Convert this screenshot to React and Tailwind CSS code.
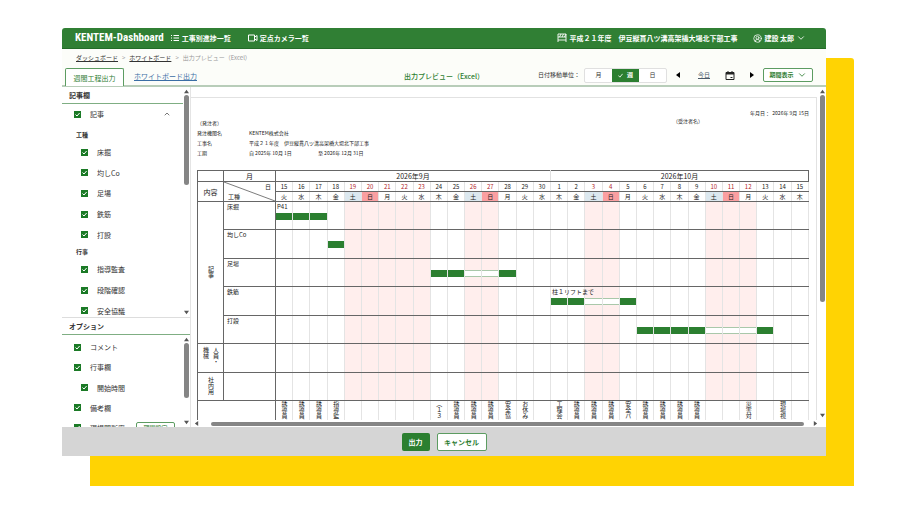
import { ChevronDown, ChevronUp, CircleUserRound } from 'lucide-react';

const WEEK = ['火', '水', '木', '金', '土', '日', '月'];
const HOLIDAYS = [4, 5, 6, 7, 8, 11, 12, 18, 19, 25, 26, 27];

// 9/15 - 10/15
const DAYS = Array.from({ length: 31 }, (_, i) => ({
  day: i < 16 ? i + 15 : i - 15,
  week: WEEK[i % 7],
  holiday: HOLIDAYS.includes(i),
}));

// bars: 1 = working day, 0 = day off inside the period
const WORKS = [
  { name: '床掘', start: 0, bars: [1, 1, 1], label: 'P41' },
  { name: '均しCo', start: 3, bars: [1] },
  { name: '足場', start: 9, bars: [1, 1, 0, 0, 1] },
  { name: '鉄筋', start: 16, bars: [1, 1, 0, 0, 1], label: '柱１リフトまで' },
  { name: '打設', start: 21, bars: [1, 1, 1, 1, 0, 0, 0, 1] },
];

const EVENTS = {
  0: '誘導員', 1: '誘導員', 2: '誘導員', 3: '指導監', 9: '（１３', 10: '誘導員', 11: '誘導員', 12: '誘導員',
  13: '安全協', 14: 'お休み', 16: '工程会', 17: '誘導員', 18: '誘導員', 19: '誘導員', 20: '安全パ',
  21: '誘導員', 22: '誘導員', 23: '誘導員', 24: '誘導員', 27: '災害対', 29: '現場視',
};

const PROJECT = '平成２１年度　伊豆縦貫八ツ溝高架橋大場北下部工事';

const Arrow = ({ className }) => (
  <svg viewBox="0 0 6 6" className={`size-[5px] shrink-0 fill-[#555] ${className}`}>
    <path d="M3 1 6 5H0Z" />
  </svg>
);

const VScroll = ({ size }) => (
  <div className="flex w-[7px] shrink-0 flex-col items-center bg-white py-px">
    <Arrow className="mt-px mb-px" />
    <div className="min-h-0 w-full flex-1 px-px">
      <div className="rounded-full bg-[#858585]" style={{ height: `${size}%` }} />
    </div>
    <Arrow className="mb-px rotate-180" />
  </div>
);

const Check = ({ label, nested, children }) => (
  <li className={`flex flex-1 items-center ${nested ? 'pl-[19px]' : 'pl-3'}`}>
    <label className="flex items-center gap-[9px]">
      <span className="grid">
        <input
          type="checkbox"
          defaultChecked
          className="peer col-start-1 row-start-1 size-[7px] appearance-none border border-[#1b7a26] bg-white checked:bg-[#1b7a26]"
        />
        <svg viewBox="0 0 7 7" className="pointer-events-none col-start-1 row-start-1 hidden size-[7px] peer-checked:block">
          <path d="M1.5 3.5 3 5 5.6 2" fill="none" stroke="white" strokeWidth="1" />
        </svg>
      </span>
      {label}
    </label>
    {children}
  </li>
);

const Sidebar = () => (
  <aside className="flex w-[129px] shrink-0 flex-col border-r border-[#e4e4e4] text-[#333]">
    <section className="flex min-h-0 flex-1">
      <div className="min-w-0 flex-1 overflow-hidden">
        <h2 className="h-[17px] border-b border-[#7fae83] pl-[7px] leading-4 font-bold">記事欄</h2>
        <ul className="flex h-6 pb-1">
          <Check label="記事">
            <ChevronUp className="mr-3 ml-auto size-2" strokeWidth={2} />
          </Check>
        </ul>
        <h3 className="h-[14px] pl-[14px] text-[6px] leading-[14px] font-bold">工種</h3>
        <ul className="flex h-[103px] flex-col">
          {WORKS.map((w) => <Check key={w.name} label={w.name} nested />)}
        </ul>
        <h3 className="h-[14px] pl-[14px] text-[6px] leading-[14px] font-bold">行事</h3>
        <ul className="flex h-[62px] flex-col">
          <Check label="指導監査" nested />
          <Check label="段階確認" nested />
          <Check label="安全協議" nested />
        </ul>
      </div>
      <VScroll size={42} />
    </section>
    <h2 className="h-[18px] border-t border-b border-t-[#ddd] border-b-[#7fae83] pl-[7px] leading-4 font-bold">オプション</h2>
    <section className="flex h-[92px] overflow-hidden">
      <div className="min-w-0 flex-1">
        <ul className="flex h-[103px] flex-col pt-[2px]">
          <Check label="コメント" />
          <Check label="行事欄" />
          <Check label="開始時間" nested />
          <Check label="備考欄" />
          <Check label="現場閉所率">
            <button className="mr-2 ml-auto h-3 w-[39px] rounded-[2px] border border-[#5c9c61] text-[6px] leading-[10px] text-[#2e7d32]">期間設定</button>
          </Check>
        </ul>
      </div>
      <VScroll size={72} />
    </section>
  </aside>
);

const dark = 'border-[#666]';

const Schedule = () => (
  <table className="w-full table-fixed border-collapse border border-[#666] text-center text-[6px] leading-[8px] text-[#222]">
    <colgroup>
      <col className="w-[26px]" />
      <col className="w-[52px]" />
      {DAYS.map((d) => <col key={d.day + d.week} />)}
    </colgroup>
    <thead>
      <tr className="h-[11px] text-[7px]">
        <td className={`border ${dark}`} />
        <th className={`border font-normal ${dark}`}>月</th>
        <th colSpan={16} className="border border-[#666] border-r-[#e0e0e0] font-normal">2026年9月</th>
        <th colSpan={15} className="border border-[#666] border-l-[#e0e0e0] font-normal">2026年10月</th>
      </tr>
      <tr className="h-[10px]">
        <th rowSpan={2} className={`border text-[7px] font-normal ${dark}`}>内容</th>
        <th rowSpan={2} className={`relative border font-normal ${dark}`}>
          <svg className="absolute inset-0 size-full" viewBox="0 0 52 20" preserveAspectRatio="none">
            <path d="M0 0 52 20" stroke="#555" strokeWidth="0.8" />
          </svg>
          <div className="flex h-[18px] flex-col justify-between px-1">
            <span className="text-right">日</span>
            <span className="text-left">工種</span>
          </div>
        </th>
        {DAYS.map((d) => (
          <th key={d.day + d.week} className={`border border-x-[#e4e4e4] border-y-[#666] font-normal ${d.holiday ? 'text-[#b3262a]' : ''}`}>
            {d.day}
          </th>
        ))}
      </tr>
      <tr className="h-[10px]">
        {DAYS.map((d) => (
          <th
            key={d.day + d.week}
            className={`border border-x-[#e4e4e4] border-y-[#666] font-normal ${d.week === '日' ? 'bg-[#fa9fa1]' : d.week === '土' ? 'bg-[#dce8ef]' : ''}`}
          >
            {d.week}
          </th>
        ))}
      </tr>
    </thead>
    <tbody>
      {WORKS.map((w, row) => (
        <tr key={w.name} className="odd:h-7 even:h-[29px]">
          {row === 0 && (
            <th rowSpan={5} className={`border font-normal ${dark}`}>
              <span className="inline-block [writing-mode:vertical-rl]">記事</span>
            </th>
          )}
          <th className={`border px-[3px] pt-px text-left align-top font-normal ${dark}`}>{w.name}</th>
          {DAYS.map((d, i) => {
            const bar = w.bars[i - w.start];
            return (
              <td key={d.day + d.week} className={`border border-x-[#e4e4e4] border-y-[#666] p-0 align-top ${d.holiday ? 'bg-[#ffeeed]' : ''}`}>
                <div className="h-[11px] w-0 pt-px pl-px whitespace-nowrap">{i === w.start && w.label}</div>
                {bar === 1 && <div className="h-[7px] bg-[#2b7f30]" />}
                {bar === 0 && <div className="h-[7px] border-y border-[#a9c8aa] bg-white" />}
              </td>
            );
          })}
        </tr>
      ))}
      {['人員・機械', '社内用'].map((name) => (
        <tr key={name} className="odd:h-7 even:h-[29px]">
          <th className={`border p-0 font-normal ${dark}`}>
            <span className="inline-block max-h-[21px] text-left leading-[10px] [writing-mode:vertical-rl]">{name}</span>
          </th>
          <td className={`border ${dark}`} />
          {DAYS.map((d) => (
            <td key={d.day + d.week} className={`border border-x-[#e4e4e4] border-y-[#666] ${d.holiday ? 'bg-[#ffeeed]' : ''}`} />
          ))}
        </tr>
      ))}
      <tr className="h-[29px]">
        <td colSpan={2} className={`border ${dark}`} />
        {DAYS.map((d, i) => (
          <td key={d.day + d.week} className="border border-x-[#e4e4e4] border-y-[#666] p-0 align-top">
            <span className="inline-block [text-orientation:upright] [writing-mode:vertical-rl]">{EVENTS[i]}</span>
          </td>
        ))}
      </tr>
    </tbody>
  </table>
);

const Preview = () => (
  <main className="flex min-w-0 flex-1 flex-col">
    <div className="flex min-h-0 flex-1">
      <div className="min-w-0 flex-1 overflow-hidden pt-[10px] pr-[2px]">
        <div className="border-t border-r border-[#e2e2e2] pr-[7px] pl-[6px] text-[5px] leading-[10px] text-[#222]">
          <p className="pt-[10px] text-right">年月日：&nbsp; 2026年 9月 15日</p>
          <div className="grid grid-cols-[52px_69px_1fr_136px] pb-[12px]">
            <p className="col-span-3">（発注者）</p>
            <p className="-mt-[2px]">（受注者名）</p>
            <p>発注機関名</p>
            <p className="col-span-3">KENTEM株式会社</p>
            <p>工事名</p>
            <p className="col-span-3">{PROJECT}</p>
            <p>工期</p>
            <p>自 2025年 10月 1日</p>
            <p className="col-span-2">至 2026年 12月 31日</p>
          </div>
          <Schedule />
        </div>
      </div>
      <VScroll size={65} />
    </div>
    <div className="flex h-[7px] items-center pr-2 pl-[3px]">
      <Arrow className="-rotate-90" />
      <div className="mr-[9px] ml-3 h-[4px] flex-1 rounded-full bg-[#858585]" />
      <Arrow className="rotate-90" />
    </div>
  </main>
);

const Toolbar = () => (
  <div className="flex items-center justify-end pr-[13px] pb-[2px] text-[6px] text-[#333]">
    <span className="mr-1">日付移動単位：</span>
    <div className="flex h-[15px] w-[83px] rounded-[2px] border border-[#e0e0e0] bg-white">
      <button className="flex-1">月</button>
      <button className="flex flex-1 items-center justify-center gap-1 bg-[#2b7f30] font-bold text-white">
        <svg viewBox="0 0 6 6" className="size-[5px]">
          <path d="M0.5 3 2.3 5 5.5 1" fill="none" stroke="white" />
        </svg>
        週
      </button>
      <button className="flex-1">日</button>
    </div>
    <button aria-label="前へ" className="ml-[9px]">
      <svg viewBox="0 0 4 6" className="h-[6px] w-[4px] fill-black"><path d="M4 0v6L0 3Z" /></svg>
    </button>
    <a href="#today" className="ml-[18px] text-[#4a5a6a] underline underline-offset-1">今日</a>
    <button aria-label="カレンダー" className="ml-[15px]">
      <svg viewBox="0 0 10 9" className="h-[9px] w-[10px]" fill="none" stroke="#222">
        <path d="M1 1.500h8v7H1z" />
        <path d="M1 2.500h8" strokeWidth="2" />
        <path d="M3 0v2M7 0v2M5.500 6.500H7.500" />
      </svg>
    </button>
    <button aria-label="次へ" className="ml-[15px]">
      <svg viewBox="0 0 4 6" className="h-[6px] w-[4px] fill-black"><path d="M0 0v6L4 3Z" /></svg>
    </button>
    <button className="ml-[9px] flex h-[14px] w-[50px] items-center justify-center gap-[3px] rounded-[2px] border border-[#5c9c61] bg-white font-bold text-[#2e7d32]">
      期間表示
      <ChevronDown className="size-[10px]" />
    </button>
  </div>
);

export default function App() {
  return (
    <div className="h-screen overflow-hidden bg-white pt-7 pr-[90px] pb-[59px] pl-[62px] font-['Noto_Sans_CJK_JP',sans-serif] text-[7px] leading-[10px]">
      <div className="flex h-full flex-col overflow-hidden rounded-t-[3px] bg-white shadow-[28px_30px_0_#ffd303]">
        <header className="flex h-[21px] shrink-0 items-center border-b border-[#236b28] bg-[#307f34] pr-5 pl-[13px] font-bold text-white">
          <h1 className="font-['Roboto_Condensed','Roboto',sans-serif] text-[11px] leading-4">KENTEM-Dashboard</h1>
          <nav className="ml-[7px] flex items-center gap-[17px]">
            <a href="#progress" className="flex items-center gap-[3px]">
              <svg viewBox="0 0 8 8" className="size-2" stroke="white">
                <path d="M0 1.500h1M2.500 1.500H8M0 4h1M2.500 4H8M0 6.500h1M2.500 6.500H8" />
              </svg>
              工事別進捗一覧
            </a>
            <a href="#camera" className="flex items-center gap-[2px]">
              <svg viewBox="0 0 10 8" className="h-2 w-[10px]" fill="none" stroke="white">
                <path d="M0.500 1h6v6h-6zM6.500 3.200 9 1.500v5L6.500 4.800" />
              </svg>
              定点カメラ一覧
            </a>
          </nav>
          <div className="ml-auto flex items-center gap-[2px]">
            <svg viewBox="0 0 10 10" className="size-[10px]" fill="none" stroke="white" strokeWidth="0.9">
              <path d="M1 1h8v3H1zM1 4v5M9 4v5M1 7h8M2.5 4 4 1M5 4 6.500 1M7.500 4 9 1" />
            </svg>
            {PROJECT}
          </div>
          <button className="ml-4 flex items-center gap-[2px]">
            <CircleUserRound className="size-[9px]" />
            建設 太郎
            <ChevronDown className="size-[10px]" />
          </button>
        </header>
        <div className="shrink-0 border-b-2 border-[#b8cdb9] bg-[#fcfdf9]">
          <nav className="flex h-[18px] items-center gap-1 pl-[14px] text-[6px] text-[#999]">
            <a href="#dashboard" className="text-[#333] underline underline-offset-1">ダッシュボード</a>
            <span>&gt;</span>
            <a href="#whiteboard" className="text-[#333] underline underline-offset-1">ホワイトボード</a>
            <span>&gt;</span>
            <span>出力プレビュー（Excel）</span>
          </nav>
          <div className="grid h-[18px] grid-cols-[1fr_auto_1fr]">
            <div className="flex items-center gap-[10px] pl-[3px]">
              <button className="-mb-[2px] h-[18px] w-[59px] rounded-t-[2px] border border-b-0 border-[#5c9c61] bg-white text-[#2e7d32]">週間工程出力</button>
              <a href="#output" className="text-[#3b6ea5] underline underline-offset-1">ホワイトボード出力</a>
            </div>
            <h2 className="self-center font-medium text-[#2e7d32]">出力プレビュー（Excel）</h2>
            <Toolbar />
          </div>
        </div>
        <div className="flex min-h-0 flex-1">
          <Sidebar />
          <Preview />
        </div>
        <footer className="flex h-[29px] shrink-0 items-center justify-center gap-[7px] bg-[#d5d5d5]">
          <button className="h-[18px] w-[28px] rounded-[2px] bg-[#2b7f30] font-bold text-white">出力</button>
          <button className="h-[18px] w-[50px] rounded-[2px] border border-[#5c9c61] bg-white font-bold text-[#2e7d32]">キャンセル</button>
        </footer>
      </div>
    </div>
  );
}
